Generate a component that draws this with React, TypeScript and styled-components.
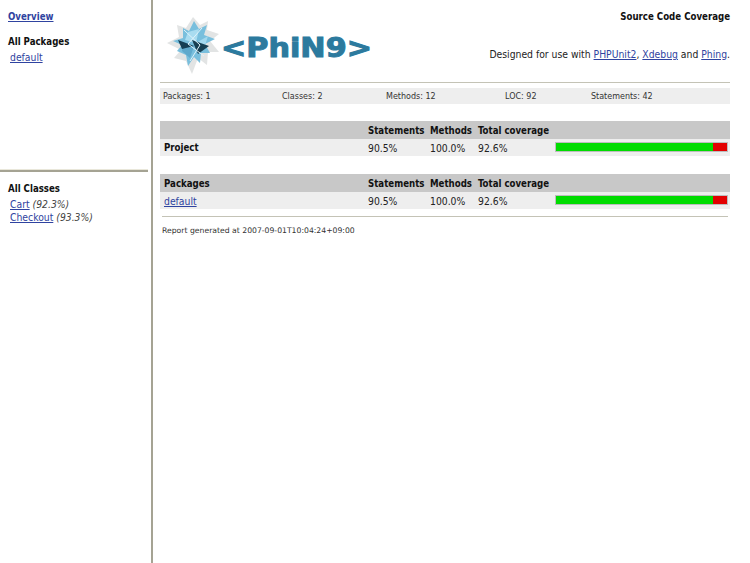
import * as React from 'react';
import styled, { createGlobalStyle } from 'styled-components';

const GlobalStyle = createGlobalStyle`
  html, body {
    margin: 0;
    padding: 0;
    background: #fff;
  }
  body {
    font-family: "DejaVu Sans Condensed", "DejaVu Sans", Verdana, sans-serif;
    font-size: 10.3px;
    color: #222;
  }
`;

const Frame = styled.div`
  display: flex;
  width: 750px;
  height: 563px;
  overflow: hidden;
`;
const Sidebar = styled.nav`
  display: flex;
  flex-direction: column;
  flex: none;
  box-sizing: border-box;
  width: 153px;
  border-right: 2px solid #a5a393;
`;
const PackagesPane = styled.div`
  box-sizing: border-box;
  height: 172px;
  padding: 10px 8px 0;
  border-bottom: 2px solid #a5a393;
  margin-right: 3px;
  box-shadow: inset 0 -1px 0 #e9e7da;
`;
const ClassesPane = styled.div`
  padding: 10px 8px 0;
`;
const Link = styled.a`
  color: #2f43a0;
  text-decoration: underline;
`;
const OverviewLink = styled(Link)`
  display: block;
  font-weight: bold;
  font-size: 9.6px;
  line-height: 13px;
`;
const PaneTitle = styled.div<{ $top?: number }>`
  font-weight: bold;
  font-size: 9.6px;
  line-height: 13px;
  color: #111;
  margin-top: ${p => p.$top || 0}px;
  margin-bottom: 3px;
`;
const PaneItem = styled.div`
  line-height: 13px;
  padding-left: 2px;
  em {
    color: #444;
  }
`;
const Main = styled.main`
  flex: 1;
  min-width: 0;
  padding: 0 20px 0 7px;
`;
const Header = styled.header`
  display: flex;
  justify-content: space-between;
  height: 82px;
  border-bottom: 1px solid #c4c3b6;
`;
const Logo = styled.svg`
  flex: none;
  margin-top: 14px;
  margin-left: 4px;
`;
const HeaderText = styled.div`
  display: flex;
  flex-direction: column;
  align-items: flex-end;
  padding-top: 10px;
`;
const ReportTitle = styled.div`
  font-weight: bold;
  font-size: 9.6px;
  line-height: 13px;
  color: #111;
  margin-bottom: 25px;
`;
const Credits = styled.div`
  line-height: 13px;
`;
const Summary = styled.div`
  display: grid;
  grid-template-columns: 119px 104px 119px 86px 1fr;
  align-items: center;
  height: 16px;
  margin: 5px 0 17px;
  padding-left: 3px;
  background: #eeeeee;
  font-family: "DejaVu Sans", Verdana, sans-serif;
  font-size: 8px;
  color: #333;
`;
const CoverageTable = styled.table`
  width: 570px;
  table-layout: fixed;
  border-collapse: collapse;
  margin-bottom: 18px;
  th, td {
    padding: 0 0 0 4px;
    text-align: left;
    white-space: nowrap;
  }
  th {
    font-size: 9.6px;
    color: #111;
  }
`;
const HeadRow = styled.tr`
  height: 18px;
  background: #c8c8c8;
`;
const BodyRow = styled.tr`
  height: 17px;
  background: #eeeeee;
`;
const NameCell = styled.td`
  font-weight: ${p => (p.as === 'th' ? 'bold' : 'normal')};
`;
const Bar = styled.div`
  display: flex;
  width: 171px;
  height: 8px;
  margin-bottom: 2px;
  border: 1px solid #bdbdbd;
  background: #e30000;
`;
const BarFill = styled.div`
  background: #00dc00;
`;
const Rule = styled.hr`
  height: 1px;
  margin: -11px 2px 8px;
  border: none;
  background: #c4c3b6;
`;
const Generated = styled.div`
  padding-left: 2px;
  font-family: "DejaVu Sans", Verdana, sans-serif;
  font-size: 7.7px;
  line-height: 11px;
  color: #333;
`;

const PhingLogo = () => (
  <Logo width="215" height="62" viewBox="0 0 215 62" role="img" aria-label="Phing">
    <g transform="translate(0 2)">
      <polygon
        points="29,1 36,9 44,5 43,14 55,18 46,25 55,36 44,36 43,49 34,42 28,58 22,45 10,42 17,34 3,27 15,21 13,9 22,12"
        fill="#e2e4e4"
      />
      <polygon
        points="30,5 35,13 43,9 40,19 51,23 41,28 46,37 37,37 36,47 30,41 24,50 22,39 13,35 18,29 9,25 19,22 19,12 25,15"
        fill="#79bfdd"
      />
      <polygon points="24,16 35,13 32,27 21,24" fill="#a9dcf0" />
      <polygon points="32,27 44,20 40,33 33,36" fill="#a3d8ee" />
      <polygon points="19,26 30,30 26,42 18,35" fill="#5fa9cc" />
      <polygon points="14,24 30,30 18,33" fill="#153f55" />
      <polygon points="28,24 45,30 34,38" fill="#173f52" />
      <polyline points="20,14 36,29 26,45" fill="none" stroke="#dff3fb" strokeWidth="1" />
      <polyline points="38,12 24,28 40,40" fill="none" stroke="#dff3fb" strokeWidth="1" />
    </g>
    <text
      x="57"
      y="43"
      textLength="151"
      lengthAdjust="spacingAndGlyphs"
      fontFamily="'DejaVu Sans', sans-serif"
      fontWeight="bold"
      fontSize="26"
      fill="#2c7a9e"
      stroke="#2c7a9e"
      strokeWidth="1"
    >
      {'<PhiN9>'}
    </text>
  </Logo>
);

const Row = ({ name, coverage, link }: { name: string; coverage: number; link?: boolean }) => (
  <BodyRow>
    <NameCell as={link ? 'td' : 'th'}>{link ? <Link href="#">{name}</Link> : name}</NameCell>
    <td>90.5%</td>
    <td>100.0%</td>
    <td>{coverage}%</td>
    <td>
      <Bar>
        <BarFill style={{ width: `${Math.floor(coverage)}%` }} />
      </Bar>
    </td>
  </BodyRow>
);

const Table = ({ title, children }: { title?: string; children: React.ReactNode }) => (
  <CoverageTable>
    <colgroup>
      <col width="204" />
      <col width="62" />
      <col width="48" />
      <col width="77" />
      <col width="179" />
    </colgroup>
    <thead>
      <HeadRow>
        <th>{title}</th>
        <th>Statements</th>
        <th>Methods</th>
        <th>Total coverage</th>
        <th />
      </HeadRow>
    </thead>
    <tbody>{children}</tbody>
  </CoverageTable>
);

const App = () => (
  <Frame>
    <GlobalStyle />
    <Sidebar>
      <PackagesPane>
        <OverviewLink href="#">Overview</OverviewLink>
        <PaneTitle $top={12}>All Packages</PaneTitle>
        <PaneItem>
          <Link href="#">default</Link>
        </PaneItem>
      </PackagesPane>
      <ClassesPane>
        <PaneTitle>All Classes</PaneTitle>
        <PaneItem>
          <Link href="#">Cart</Link> <em>(92.3%)</em>
        </PaneItem>
        <PaneItem>
          <Link href="#">Checkout</Link> <em>(93.3%)</em>
        </PaneItem>
      </ClassesPane>
    </Sidebar>
    <Main>
      <Header>
        <PhingLogo />
        <HeaderText>
          <ReportTitle>Source Code Coverage</ReportTitle>
          <Credits>
            Designed for use with <Link href="#">PHPUnit2</Link>, <Link href="#">Xdebug</Link> and{' '}
            <Link href="#">Phing</Link>.
          </Credits>
        </HeaderText>
      </Header>
      <Summary>
        <span>Packages: 1</span>
        <span>Classes: 2</span>
        <span>Methods: 12</span>
        <span>LOC: 92</span>
        <span>Statements: 42</span>
      </Summary>
      <Table>
        <Row name="Project" coverage={92.6} />
      </Table>
      <Table title="Packages">
        <Row name="default" coverage={92.6} link />
      </Table>
      <Rule />
      <Generated>Report generated at 2007-09-01T10:04:24+09:00</Generated>
    </Main>
  </Frame>
);

export default App;
